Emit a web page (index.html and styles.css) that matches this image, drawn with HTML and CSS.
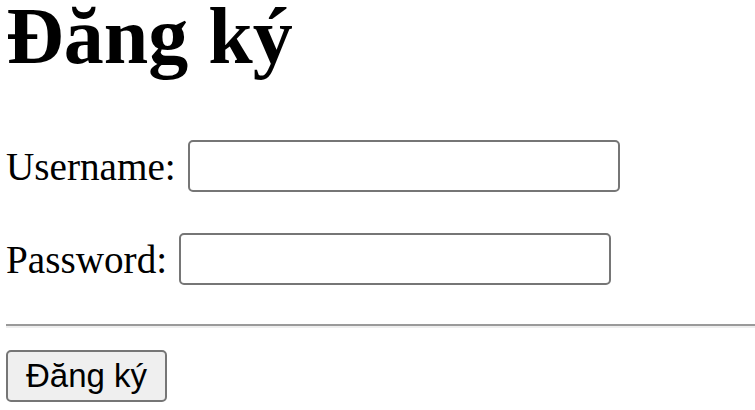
FILE: index.html
```html
<!DOCTYPE html>
<html lang="vi">
<head>
<meta charset="utf-8">
<title>Đăng ký</title>
<link rel="stylesheet" href="styles.css">
</head>
<body>
<div class="page">
  <h1 class="title">Đăng ký</h1>
  <form class="form">
    <div class="row row-user">
      <label class="label" for="u">Username:</label>
      <input class="field" id="u" type="text">
    </div>
    <div class="row row-pass">
      <label class="label" for="p">Password:</label>
      <input class="field" id="p" type="password">
    </div>
    <hr class="rule">
    <button class="btn" type="button">Đăng ký</button>
  </form>
</div>
</body>
</html>
```
FILE: styles.css
```css
html, body {
  margin: 0;
  padding: 0;
  background: #fff;
}
.page {
  padding: 0 0 0 6px;
  font-family: "Liberation Serif", "Times New Roman", serif;
  font-size: 39.2px;
  color: #000;
}
.title {
  margin: 0;
  font-size: 80px;
  font-weight: bold;
  line-height: 72px;
}
.form {
  display: flex;
  flex-direction: column;
  align-items: flex-start;
}
.row {
  display: flex;
  align-items: center;
  height: 52px;
  gap: 12px;
}
.row-user {
  margin-top: 68px;
}
.row-pass {
  margin-top: 41px;
}
.label {
  line-height: 45px;
}
.field {
  box-sizing: border-box;
  width: 432px;
  height: 52px;
  margin: 0;
  border: 2px solid #767676;
  border-radius: 5px;
  background: #fff;
  padding: 2px 5px;
  font-family: "Liberation Sans", Arial, sans-serif;
  font-size: 32px;
}
.rule {
  align-self: stretch;
  margin: 39px 0 0 0;
  height: 0;
  border: 0;
  border-top: 2px solid #9a9a9a;
  border-bottom: 2px solid #eeeeee;
}
.btn {
  box-sizing: border-box;
  margin-top: 22px;
  width: 161px;
  height: 52px;
  border: 2px solid #767676;
  border-radius: 5px;
  background: #efefef;
  color: #000;
  font-family: "Liberation Sans", Arial, sans-serif;
  font-size: 33px;
  padding: 0;
}
```
